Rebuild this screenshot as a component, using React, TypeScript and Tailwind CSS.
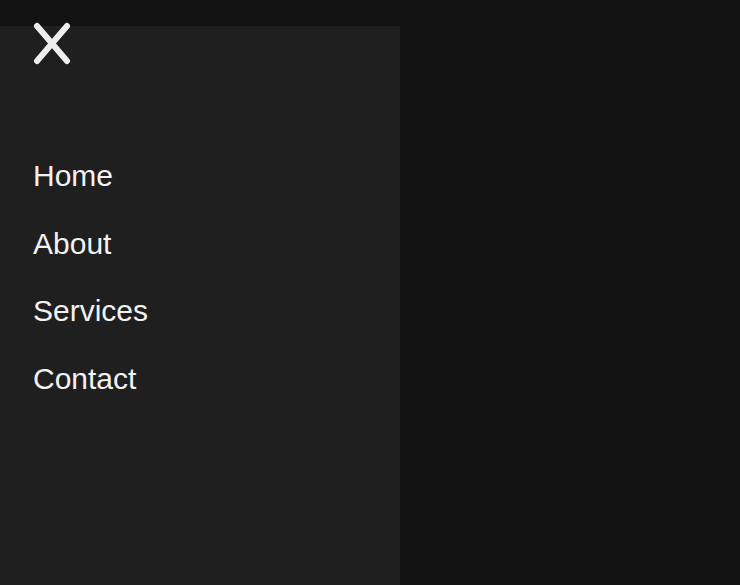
export default function App() {
  const links = ['Home', 'About', 'Services', 'Contact'];

  return (
    <div className="relative h-[585px] w-[740px] overflow-hidden bg-[#121212] pt-[26px]" style={{ fontFamily: '"Liberation Sans", Arial, sans-serif' }}>
      {/* close button sits over the panel edge */}
      <button className="absolute left-[33px] top-[22px] text-[#eeeeee]" aria-label="Close menu">
        <svg width="38" height="43" viewBox="0 0 38 43" fill="none" stroke="currentColor" strokeWidth="6" strokeLinecap="round">
          <line x1="4" y1="4" x2="34" y2="39" />
          <line x1="34" y1="4" x2="4" y2="39" />
        </svg>
      </button>

      <aside className="h-full w-[400px] bg-[#1f1f1f] pl-[33px] pt-[132px]">
        <nav>
          <ul className="flex flex-col gap-[31.5px]">
            {links.map((l) => (
              <li key={l}>
                <a href="#" className="text-[30px] leading-9 text-[#f2f2f2]">
                  {l}
                </a>
              </li>
            ))}
          </ul>
        </nav>
      </aside>
    </div>
  );
}
